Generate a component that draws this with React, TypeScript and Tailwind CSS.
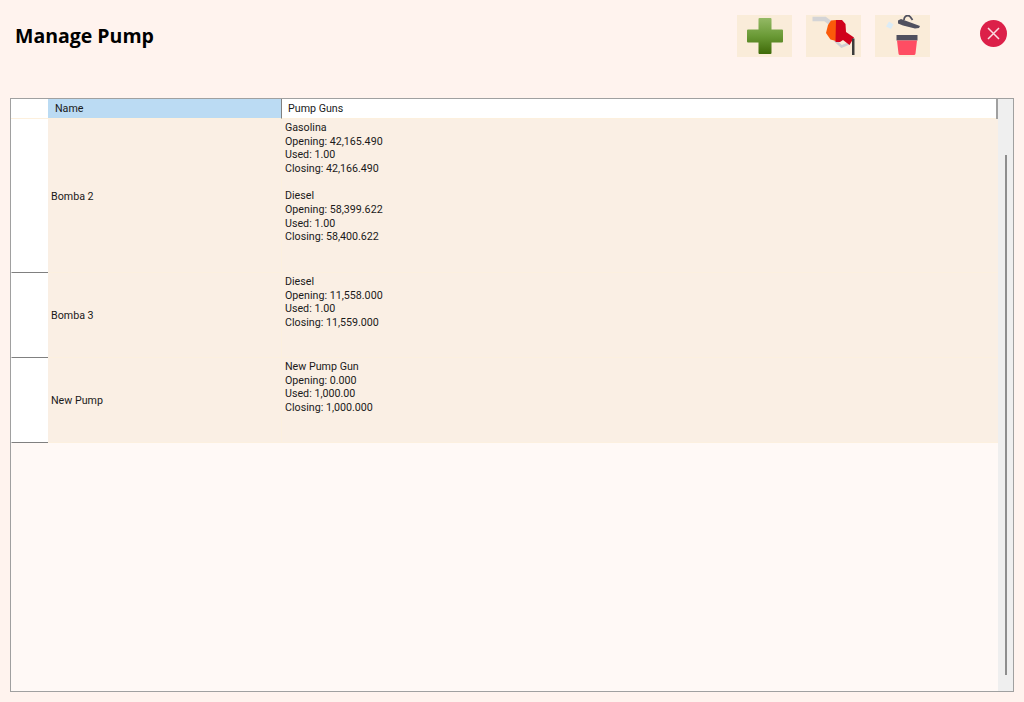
import React from 'react';

const rows = [
  {
    name: 'Bomba 2',
    height: 'h-[154px]',
    guns: ['Gasolina', 'Opening: 42,165.490', 'Used: 1.00', 'Closing: 42,166.490', '', 'Diesel', 'Opening: 58,399.622', 'Used: 1.00', 'Closing: 58,400.622'],
  },
  {
    name: 'Bomba 3',
    height: 'h-[85px]',
    guns: ['Diesel', 'Opening: 11,558.000', 'Used: 1.00', 'Closing: 11,559.000'],
  },
  {
    name: 'New Pump',
    height: 'h-[85px]',
    guns: ['New Pump Gun', 'Opening: 0.000', 'Used: 1,000.00', 'Closing: 1,000.000'],
  },
];

const PlusIcon = () => (
  <svg width="38" height="38" viewBox="0 0 38 38">
    <defs>
      <linearGradient id="plus" x1="0" y1="0" x2="0" y2="1">
        <stop offset="0" stopColor="#94b965" />
        <stop offset="0.5" stopColor="#6a9a36" />
        <stop offset="1" stopColor="#3f6a08" />
      </linearGradient>
    </defs>
    <path d="M13.500 1h11a1 1 0 0 1 1 1v10.500H36a1 1 0 0 1 1 1v11a1 1 0 0 1-1 1H25.500V36a1 1 0 0 1-1 1h-11a1 1 0 0 1-1-1V25.500H2a1 1 0 0 1-1-1v-11a1 1 0 0 1 1-1h10.500V2a1 1 0 0 1 1-1z" fill="url(#plus)" />
  </svg>
);

const NozzleIcon = () => (
  <svg width="55" height="42" viewBox="0 0 55 42">
    <path d="M6.500 4H19l8 6" fill="none" stroke="#d4d4d6" strokeWidth="4.500" />
    <path d="M28.500 25l7 6.500 7.500-3" fill="none" stroke="#cfcfd2" strokeWidth="2.500" />
    <path d="M25 5.500l5-.5v21l-5.500-1.500-4.500-6.500 2-8z" fill="#fb5a0a" />
    <path d="M30 5h6l3.500 4 .5 8 8 5.500-4.500 7.500-6.500-5-3 2-4.500 0z" fill="#d0021b" />
    <path d="M46 23.500h2.500V40H46z" fill="#3c3c3c" />
  </svg>
);

const BinIcon = () => (
  <svg width="55" height="42" viewBox="0 0 55 42">
    <path d="M14 6.500l4.500 3-2.500 4.500-5-2.500z" fill="#dcecf6" />
    <path d="M23 5.500l3-1.500 19 7-1 2-4 .5-12-3-5-2z" fill="#50505f" />
    <path d="M29 5c0-3 2-4.500 4-4.500 2 0 3 2 4.500 4.500" fill="none" stroke="#50505f" strokeWidth="1.800" />
    <path d="M21.500 20h21v5.500h-21z" fill="#50505f" />
    <path d="M22 25.500h20l-1.500 13c-.1 1-1 1.500-2 1.500H25.500c-1 0-1.900-.5-2-1.500z" fill="#ff4d63" />
  </svg>
);

const App = () => {
  return (
    <div className="w-[1024px] h-[702px] bg-[#fff3ee] flex flex-col overflow-hidden font-['Roboto','Noto_Sans',sans-serif] text-black">
      <header className="h-[98px] flex items-start">
        <h1 className="ml-[15px] mt-[22px] text-[19.5px] leading-[28px] font-bold font-['Open_Sans',sans-serif] w-[722px]">Manage Pump</h1>
        <div className="mt-[15px] flex gap-[14px]">
          <button className="w-[55px] h-[42px] bg-[#faecd9] flex items-center justify-center">
            <PlusIcon />
          </button>
          <button className="w-[55px] h-[42px] bg-[#faecd9] flex items-center justify-center">
            <NozzleIcon />
          </button>
          <button className="w-[55px] h-[42px] bg-[#faecd9] flex items-center justify-center">
            <BinIcon />
          </button>
        </div>
        <button className="ml-[50px] mt-[20px] w-[27px] h-[27px] rounded-full bg-[#dc2049] flex items-center justify-center">
          <svg width="15" height="15" viewBox="0 0 15 15">
            <path d="M2 2l11 11M13 2L2 13" stroke="#fbdde2" strokeWidth="1.500" />
          </svg>
        </button>
      </header>

      <div className="mx-[10px] w-[1004px] h-[594px] border border-[#a0a0a0] bg-[#fff9f6] flex text-[10.7px] leading-[13.67px] text-[#1a1a1a]">
        <div className="w-[987px] flex flex-col">
          <div className="flex h-[20px] border-r-2 border-[#a0a0a0]">
            <div className="w-[37px] bg-white border-b border-[#fdf0dd]" />
            <div className="w-[233px] bg-[#bbdbf3] flex items-center pl-[7px] border-b border-[#fdf0dd]">Name</div>
            <div className="flex-1 bg-white border-l border-[#808080] flex items-center pl-[6px] border-b border-b-[#fdf0dd]">Pump Guns</div>
          </div>
          {rows.map((row) => (
            <div key={row.name} className={`flex ${row.height}`}>
              <div className="w-[37px] bg-white border-b border-[#808080] border-l border-l-white" />
              <div className="w-[233px] bg-[#faefe4] flex items-center pl-[3px] pt-[2px] border-b border-[#fcf0df]">{row.name}</div>
              <div className="flex-1 bg-[#faefe4] border-l border-[#fcf0df] border-b pl-[3px] pt-[2px]">
                {row.guns.map((line, i) => (
                  <div key={i} className="h-[13.67px] whitespace-nowrap">{line}</div>
                ))}
              </div>
            </div>
          ))}
        </div>
        <div className="w-[15px] bg-[#efefef] flex justify-center">
          <div className="mt-[56px] w-[2px] h-[520px] bg-[#8e8e8e]" />
        </div>
      </div>
    </div>
  );
};

export default App;
